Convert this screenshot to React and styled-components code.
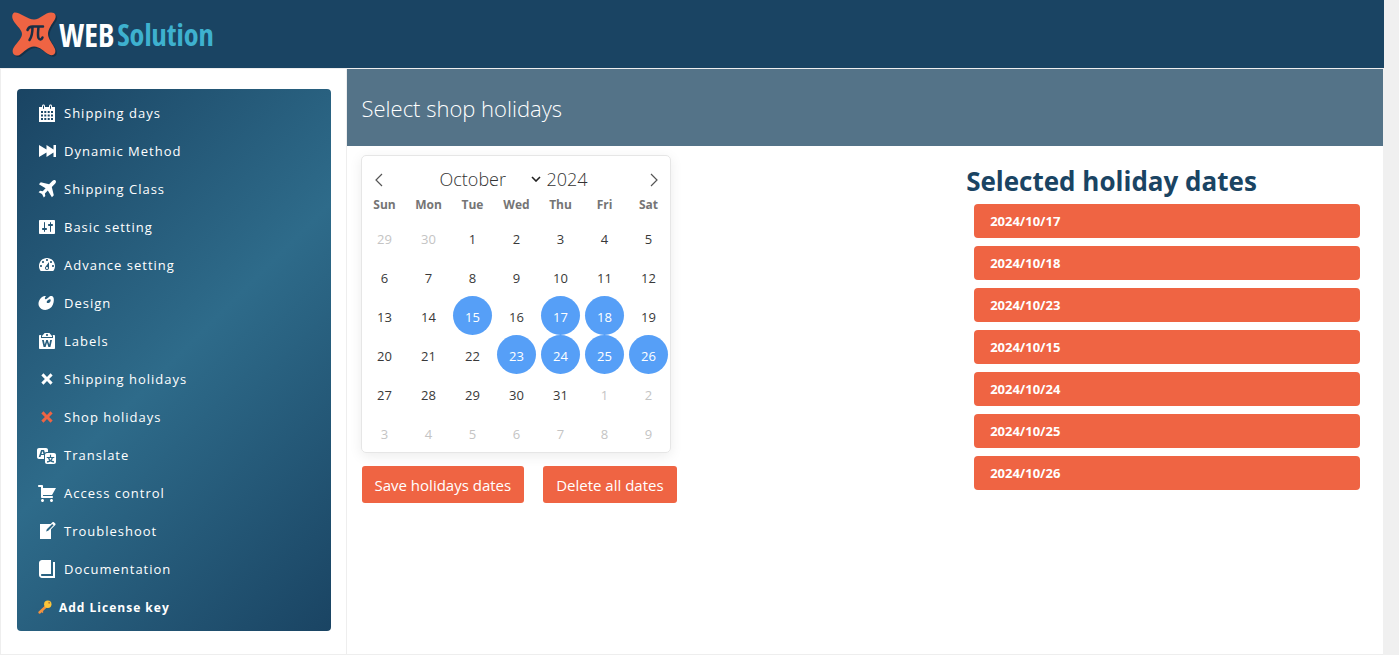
import React, { useState } from 'react'
import styled, { createGlobalStyle } from 'styled-components';

const menu = [
    {
        name: "Shipping days",
        path: "M15 4h3v15H2V4h3V3c0-.8.7-1.5 1.5-1.5S8 2.2 8 3v1h4V3c0-.8.7-1.5 1.5-1.5S15 2.2 15 3zM6 3v2.5c0 .3.2.5.5.5s.5-.2.5-.5V3c0-.3-.2-.5-.5-.5S6 2.7 6 3zm7 0v2.5c0 .3.2.5.5.5s.5-.2.5-.5V3c0-.3-.2-.5-.5-.5s-.5.2-.5.5zM4 8v2h2V8zm3.3 0v2h2V8zm3.4 0v2h2V8zM14 8v2h2V8zM4 11.5v2h2v-2zm3.3 0v2h2v-2zm3.4 0v2h2v-2zm3.3 0v2h2v-2zM4 15v2h2v-2zm3.3 0v2h2v-2zm3.4 0v2h2v-2zm3.3 0v2h2v-2z",
    },
    {
        name: "Dynamic Method",
        path: "M2 4l7.5 4.5V4l7 4.5V4H19v12h-2.500v-4.500l-7 4.500v-4.500L2 16z",
    },
    {
        name: "Shipping Class",
        path: "M18.5 1.5c.9.9.5 2.3-.5 3.300L14.800 8l2 8.300-1.900 1.900-4.100-6.700-2.900 2.900.4 2.600-1.500 1.500-1.800-3.400-3.400-1.800 1.500-1.500 2.600.4 2.900-2.900L1.900 5.200l1.900-1.900 8.300 2 3.200-3.200c1-1 2.400-1.400 3.200-.6z",
    },
    {
        name: "Basic setting",
        path: "M18 16V4c0-.55-.45-1-1-1H3c-.55 0-1 .45-1 1v12c0 .55.45 1 1 1h14c.55 0 1-.45 1-1zM8 11h1c.55 0 1 .45 1 1s-.45 1-1 1H8v1.5c0 .28-.22.5-.5.5s-.5-.22-.5-.5V13H6c-.55 0-1-.45-1-1s.45-1 1-1h1V5.5c0-.28.22-.5.5-.5s.5.22.5.5V11zm5-2h-1c-.55 0-1-.45-1-1s.45-1 1-1h1V5.5c0-.28.22-.5.5-.5s.5.22.5.5V7h1c.55 0 1 .45 1 1s-.45 1-1 1h-1v5.5c0 .28-.22.5-.5.5s-.5-.22-.5-.5V9z",
    },
    {
        name: "Advance setting",
        path: "M3.76 16h12.48c1.1-1.37 1.76-3.11 1.76-5 0-4.42-3.58-8-8-8s-8 3.58-8 8c0 1.89.66 3.63 1.76 5zM10 4c.55 0 1 .45 1 1s-.45 1-1 1-1-.45-1-1 .45-1 1-1zM6 6c.55 0 1 .45 1 1s-.45 1-1 1-1-.45-1-1 .45-1 1-1zm8 0c.55 0 1 .45 1 1s-.45 1-1 1-1-.45-1-1 .45-1 1-1zm-5.37 5.55L12 7v6c0 1.1-.9 2-2 2s-2-.9-2-2c0-.57.24-1.08.63-1.45zM4 10c.55 0 1 .45 1 1s-.45 1-1 1-1-.45-1-1 .45-1 1-1zm12 0c.55 0 1 .45 1 1s-.45 1-1 1-1-.45-1-1 .45-1 1-1zm-5 3c0-.55-.45-1-1-1s-1 .45-1 1 .45 1 1 1 1-.45 1-1z",
    },
    {
        name: "Design",
        path: "M8.55 3.06c1.01.34-1.95 2.01-.1 3.13 1.04.63 3.31-2.22 4.45-2.86.97-.54 2.67-.65 3.53 1.23 1.09 2.38.14 8.57-3.79 11.06-3.97 2.5-8.97 1.23-10.7-2.66-2.01-4.53 3.12-11.09 6.61-9.9zm1.21 6.45c.73 1.64 4.7-.5 3.79-2.8-.59-1.49-4.48 1.25-3.79 2.8z",
    },
    {
        name: "Labels",
        path: "M12.38 2L15 5v1H5V5l2.64-3h4.74zM10 5c.55 0 1-.45 1-1s-.45-1-1-1-1 .45-1 1 .45 1 1 1zm8 12V5c0-.55-.45-1-1-1h-1.54l.54.63V7H4V4.62L4.55 4H3c-.55 0-1 .45-1 1v12c0 .55.45 1 1 1h14c.55 0 1-.45 1-1zM15 9l-1.6 7h-2L10 11.5 8.6 16h-2L5 9h1.8l1 4.5L9.2 9h1.6l1.4 4.5 1-4.5z",
    },
    {
        name: "Shipping holidays",
        path: "M12.12 10l3.53 3.53-2.12 2.12L10 12.12l-3.54 3.54-2.12-2.12L7.88 10 4.34 6.46l2.12-2.12L10 7.88l3.54-3.53 2.12 2.12z",
    },
    {
        name: "Shop holidays",
        path: "M12.12 10l3.53 3.53-2.12 2.12L10 12.12l-3.54 3.54-2.12-2.12L7.88 10 4.34 6.46l2.12-2.12L10 7.88l3.54-3.53 2.12 2.12z",
        active: true,
    },
    {
        name: "Translate",
        path: "M11 7H9.49c-.63 0-1.25.3-1.59.7L7 5H4.13l-2.39 7h1.69l.74-2H7v4H2c-1.1 0-2-.9-2-2V5c0-1.1.9-2 2-2h7c1.1 0 2 .9 2 2v2zM6.51 9H4.49l1-2.93zM10 8h7c1.1 0 2 .9 2 2v7c0 1.1-.9 2-2 2h-7c-1.1 0-2-.9-2-2v-7c0-1.1.9-2 2-2zm7.25 5v-1.08h-3.17V9.75h-1.16v2.17H9.75V13h1.28c.11.85.56 1.85 1.28 2.62-.87.36-1.89.62-2.31.62-.01.02.22.97.2 1.46.84 0 2.21-.5 3.28-1.15 1.09.65 2.48 1.15 3.34 1.15-.02-.49.2-1.44.2-1.46-.43 0-1.49-.27-2.38-.63.7-.77 1.14-1.77 1.25-2.61h1.36zm-3.81 1.93c-.5-.46-.85-1.13-1.01-1.93h2.09c-.17.8-.51 1.47-1 1.93l-.04.03s-.03-.02-.04-.03z",
    },
    {
        name: "Access control",
        path: "M6 13h9c.55 0 1 .45 1 1s-.45 1-1 1H5c-.55 0-1-.45-1-1V4H2c-.55 0-1-.45-1-1s.45-1 1-1h3c.55 0 1 .45 1 1v2h13l-4 7H6v1zm-.5 3c.83 0 1.5.67 1.5 1.5S6.33 19 5.5 19 4 18.33 4 17.5 4.67 16 5.5 16zm9 0c.83 0 1.5.67 1.5 1.5s-.67 1.5-1.5 1.5-1.5-.67-1.5-1.5.67-1.5 1.5-1.5z",
    },
    {
        name: "Troubleshoot",
        path: "M16.89 1.2l1.41 1.41c.39.39.39 1.02 0 1.41L14 8.33V18H3V3h10.67l1.8-1.8c.4-.39 1.03-.4 1.42 0zm-5.66 8.48l5.37-5.36-1.42-1.42-5.36 5.37-.71 2.12z",
    },
    {
        name: "Documentation",
        path: "M16 3h2v16H5c-1.66 0-3-1.34-3-3V4c0-1.66 1.34-3 3-3h9v14H5c-.55 0-1 .45-1 1s.45 1 1 1h11V3z",
    },
];

const weekdays = ["Sun", "Mon", "Tue", "Wed", "Thu", "Fri", "Sat"];

const months = [
    "January", "February", "March", "April", "May", "June",
    "July", "August", "September", "October", "November", "December",
];

// six weeks starting on Sunday, September 29
const days = Array.from({ length: 42 }, (_, i) => {
    const date = new Date(2024, 8, 29 + i);
    return {
        day: date.getDate(),
        key: `${date.getFullYear()}/${String(date.getMonth() + 1).padStart(2, "0")}/${String(date.getDate()).padStart(2, "0")}`,
        outside: date.getMonth() !== 9,
    };
});

const logoShape = "M4 3.5C9 3.500 17 10.500 23 10.500S34 3.500 40 3.500c4.500 0 6 3.500 3.500 7.500C41 15 37 20 37 25s5 10 7 15c1.500 5-2 7.500-6 5.500-5-2.500-9-8-15-8s-10 5.500-14.500 8.500C4 48 .5 44.500 2 40c2-5 9-10 9-15S3 15 1.500 9.500C.7 6 2 3.500 4 3.500z";

const Logo = () => (
    <LogoLink href="#" aria-label="PI Web Solution">
        <svg width="48" height="50" viewBox="0 0 48 50" aria-hidden="true">
            <path d={logoShape} transform="translate(1.500 1.500)" fill="#12293d" opacity=".7" />
            <path d={logoShape} fill="#ef6443" />
            <path d="M16.500 21c1-3 2.500-3.500 5-3.500H32M21.500 18c0 5 0 9-3 13M27.500 18c-.5 5-1 8 0 11 1 2 3 2 4-.5" fill="none" stroke="#1a2f45" strokeWidth="2.500" strokeLinecap="round" />
        </svg>
        <LogoText>WEB</LogoText>
        <LogoText $accent>Solution</LogoText>
    </LogoLink>
)

const App = () => {
    const [selected, setSelected] = useState([
        "2024/10/17",
        "2024/10/18",
        "2024/10/23",
        "2024/10/15",
        "2024/10/24",
        "2024/10/25",
        "2024/10/26",
    ]);

    const toggle = (key) => {
        setSelected(selected.includes(key) ? selected.filter((d) => d !== key) : [...selected, key]);
    };

  return (
    <Page>
      <GlobalStyle />
      <Header>
        <Logo />
      </Header>
      <Body>
        <Sidebar>
          <Menu>
            {menu.map((item) => (
              <MenuLink href="#" key={item.name}>
                <MenuIcon viewBox="0 0 20 20" $active={item.active} aria-hidden="true">
                  <path d={item.path} fillRule="evenodd" />
                </MenuIcon>
                {item.name}
              </MenuLink>
            ))}
            <MenuLink href="#" $license>
              <KeyIcon viewBox="0 0 16 16" aria-hidden="true">
                <path d="M9.5 7L2.5 13.5" stroke="#f5923e" strokeWidth="2.4" strokeLinecap="round" />
                <path d="M4.5 12l1.5 1.5" stroke="#f5923e" strokeWidth="1.5" />
                <circle cx="10.8" cy="5.2" r="3.7" fill="#fdc53a" />
                <circle cx="12.2" cy="3.8" r="1" fill="#b9803a" />
              </KeyIcon>
              Add License key
            </MenuLink>
          </Menu>
        </Sidebar>

        <Content>
          <Title>Select shop holidays</Title>
          <Columns>
            <section>
              <Calendar>
                <MonthBar>
                  <ArrowButton aria-label="Previous month">
                    <svg width="10" height="14" viewBox="0 0 10 14"><path d="M8 1L2 7l6 6" /></svg>
                  </ArrowButton>
                  <MonthPicker>
                    <MonthSelect aria-label="Month" defaultValue="October">
                      {months.map((month) => <option key={month}>{month}</option>)}
                    </MonthSelect>
                    <YearInput aria-label="Year" defaultValue="2024" />
                  </MonthPicker>
                  <ArrowButton aria-label="Next month">
                    <svg width="10" height="14" viewBox="0 0 10 14"><path d="M2 1l6 6-6 6" /></svg>
                  </ArrowButton>
                </MonthBar>
                <Week>
                  {weekdays.map((day) => <Weekday key={day}>{day}</Weekday>)}
                </Week>
                <Week>
                  {days.map((item) => (
                    <Day
                      key={item.key}
                      $outside={item.outside}
                      $selected={selected.includes(item.key)}
                      onClick={() => toggle(item.key)}
                    >
                      {item.day}
                    </Day>
                  ))}
                </Week>
              </Calendar>
              <Actions>
                <ActionButton>Save holidays dates</ActionButton>
                <ActionButton onClick={() => setSelected([])}>Delete all dates</ActionButton>
              </Actions>
            </section>
            <section>
              <DatesTitle>Selected holiday dates</DatesTitle>
              <DateList>
                {selected.map((date) => <DateItem key={date}>{date}</DateItem>)}
              </DateList>
            </section>
          </Columns>
        </Content>
      </Body>
    </Page>
  )
}

export default App


const GlobalStyle = createGlobalStyle`
  * {
    box-sizing: border-box;
  }

  body {
    margin: 0;
    background: #f0f0f0;
    font-family: "Open Sans", "Noto Sans", sans-serif;
  }

  button, select, input {
    font-family: inherit;
  }
`

const Page = styled.div`
  display: flex;
  flex-direction: column;
  min-height: 100vh;
  margin-right: 15px;
`

const Header = styled.header`
  display: flex;
  align-items: center;
  height: 68px;
  padding-left: 11px;
  background: #1a4463;
`

const LogoLink = styled.a`
  display: flex;
  align-items: center;
  text-decoration: none;
`

const LogoText = styled.span`
  margin-right: 3px;
  color: ${({ $accent }) => ($accent ? '#3eb1cf' : '#fff')};
  font-family: "Open Sans Condensed", "Liberation Sans Narrow", "Open Sans", sans-serif;
  font-size: ${({ $accent }) => ($accent ? '30px' : '32px')};
  font-weight: 700;
`

const Body = styled.div`
  display: flex;
  flex: 1;
  margin-right: 1px;
  border: 1px solid #eee;
  border-right: 0;
  background: #fff;
`

const Sidebar = styled.aside`
  width: 25%;
  padding: 20px 15px 20px 16px;
  border-right: 1px solid #eee;
`

const Menu = styled.nav`
  padding: 5px 20px;
  border-radius: 4px;
  background: linear-gradient(135deg, #1a4463, #2e6b8a 50%, #1a4463);
`

const MenuLink = styled.a`
  display: flex;
  align-items: center;
  gap: ${({ $license }) => ($license ? '6px' : '7px')};
  height: 38px;
  color: #fff;
  font-size: ${({ $license }) => ($license ? '12px' : '13px')};
  font-weight: ${({ $license }) => ($license ? 700 : 400)};
  letter-spacing: 1px;
  text-decoration: none;
`

const MenuIcon = styled.svg`
  width: 20px;
  height: 20px;
  fill: ${({ $active }) => ($active ? '#ef6443' : '#fff')};
`

const KeyIcon = styled.svg`
  width: 16px;
  height: 16px;
`

const Content = styled.main`
  flex: 1;
`

const Title = styled.h1`
  margin: 0;
  padding: 2px 15px 0;
  background: #547388;
  color: #fff;
  font-size: 22px;
  font-weight: 300;
  line-height: 75px;
`

const Columns = styled.div`
  display: grid;
  grid-template-columns: 7fr 5fr;

  section {
    padding: 9px 15px;
  }
`

const Calendar = styled.div`
  width: 310px;
  margin-left: -1px;
  padding-left: 1px;
  border: 1px solid #e6e6e6;
  border-radius: 5px;
  box-shadow: 0 3px 13px rgba(0, 0, 0, 0.08);
`

const MonthBar = styled.div`
  display: flex;
  align-items: center;
  justify-content: space-between;
  height: 34px;
  padding-top: 12px;
`

const ArrowButton = styled.button`
  display: flex;
  justify-content: center;
  width: 32px;
  padding: 2px 0 0;
  border: 0;
  background: none;

  path {
    fill: none;
    stroke: #555;
    stroke-width: 1.2px;
  }
`

const MonthPicker = styled.div`
  display: flex;
  align-items: center;
  gap: 6px;
  padding-left: 6px;
`

const MonthSelect = styled.select`
  appearance: none;
  width: 101px;
  padding: 0;
  border: 0;
  background: url("data:image/svg+xml,%3Csvg xmlns='http://www.w3.org/2000/svg' width='10' height='6'%3E%3Cpath d='M1 1l4 4 4-4' fill='none' stroke='%23222' stroke-width='1.6'/%3E%3C/svg%3E") no-repeat right center;
  color: #333;
  font-size: 18px;
  font-weight: 300;
`

const YearInput = styled.input`
  width: 52px;
  padding: 0;
  border: 0;
  background: none;
  color: #333;
  font-size: 18px;
  font-weight: 300;
`

const Week = styled.div`
  display: grid;
  grid-template-columns: repeat(7, 44px);
  justify-items: center;
`

const Weekday = styled.span`
  padding-top: 2px;
  color: #757575;
  font-size: 12px;
  font-weight: 700;
  line-height: 26px;
`

const Day = styled.button`
  width: 39px;
  height: 39px;
  padding: 2px 0 0;
  border: 0;
  border-radius: 50%;
  background: ${({ $selected }) => ($selected ? '#569ff7' : 'none')};
  color: ${({ $selected, $outside }) => ($selected ? '#fff' : $outside ? '#c4c4c4' : '#393939')};
  font-size: 13px;
`

const Actions = styled.div`
  display: flex;
  gap: 19px;
  margin-top: 13px;
`

const ActionButton = styled.button`
  height: 37px;
  padding: 0 13px;
  border: 0;
  border-radius: 3px;
  background: #ef6443;
  color: #fff;
  font-size: 15px;
`

const DatesTitle = styled.h2`
  margin: 0;
  padding-top: 3px;
  color: #1a4463;
  font-size: 26px;
  font-weight: 700;
  line-height: 46px;
`

const DateList = styled.ul`
  display: grid;
  gap: 8px;
  margin: 0;
  padding: 0 8px;
  list-style: none;
`

const DateItem = styled.li`
  padding: 0 16px;
  border-radius: 4px;
  background: #ef6443;
  color: #fff;
  font-size: 13px;
  font-weight: 700;
  line-height: 34px;
`
